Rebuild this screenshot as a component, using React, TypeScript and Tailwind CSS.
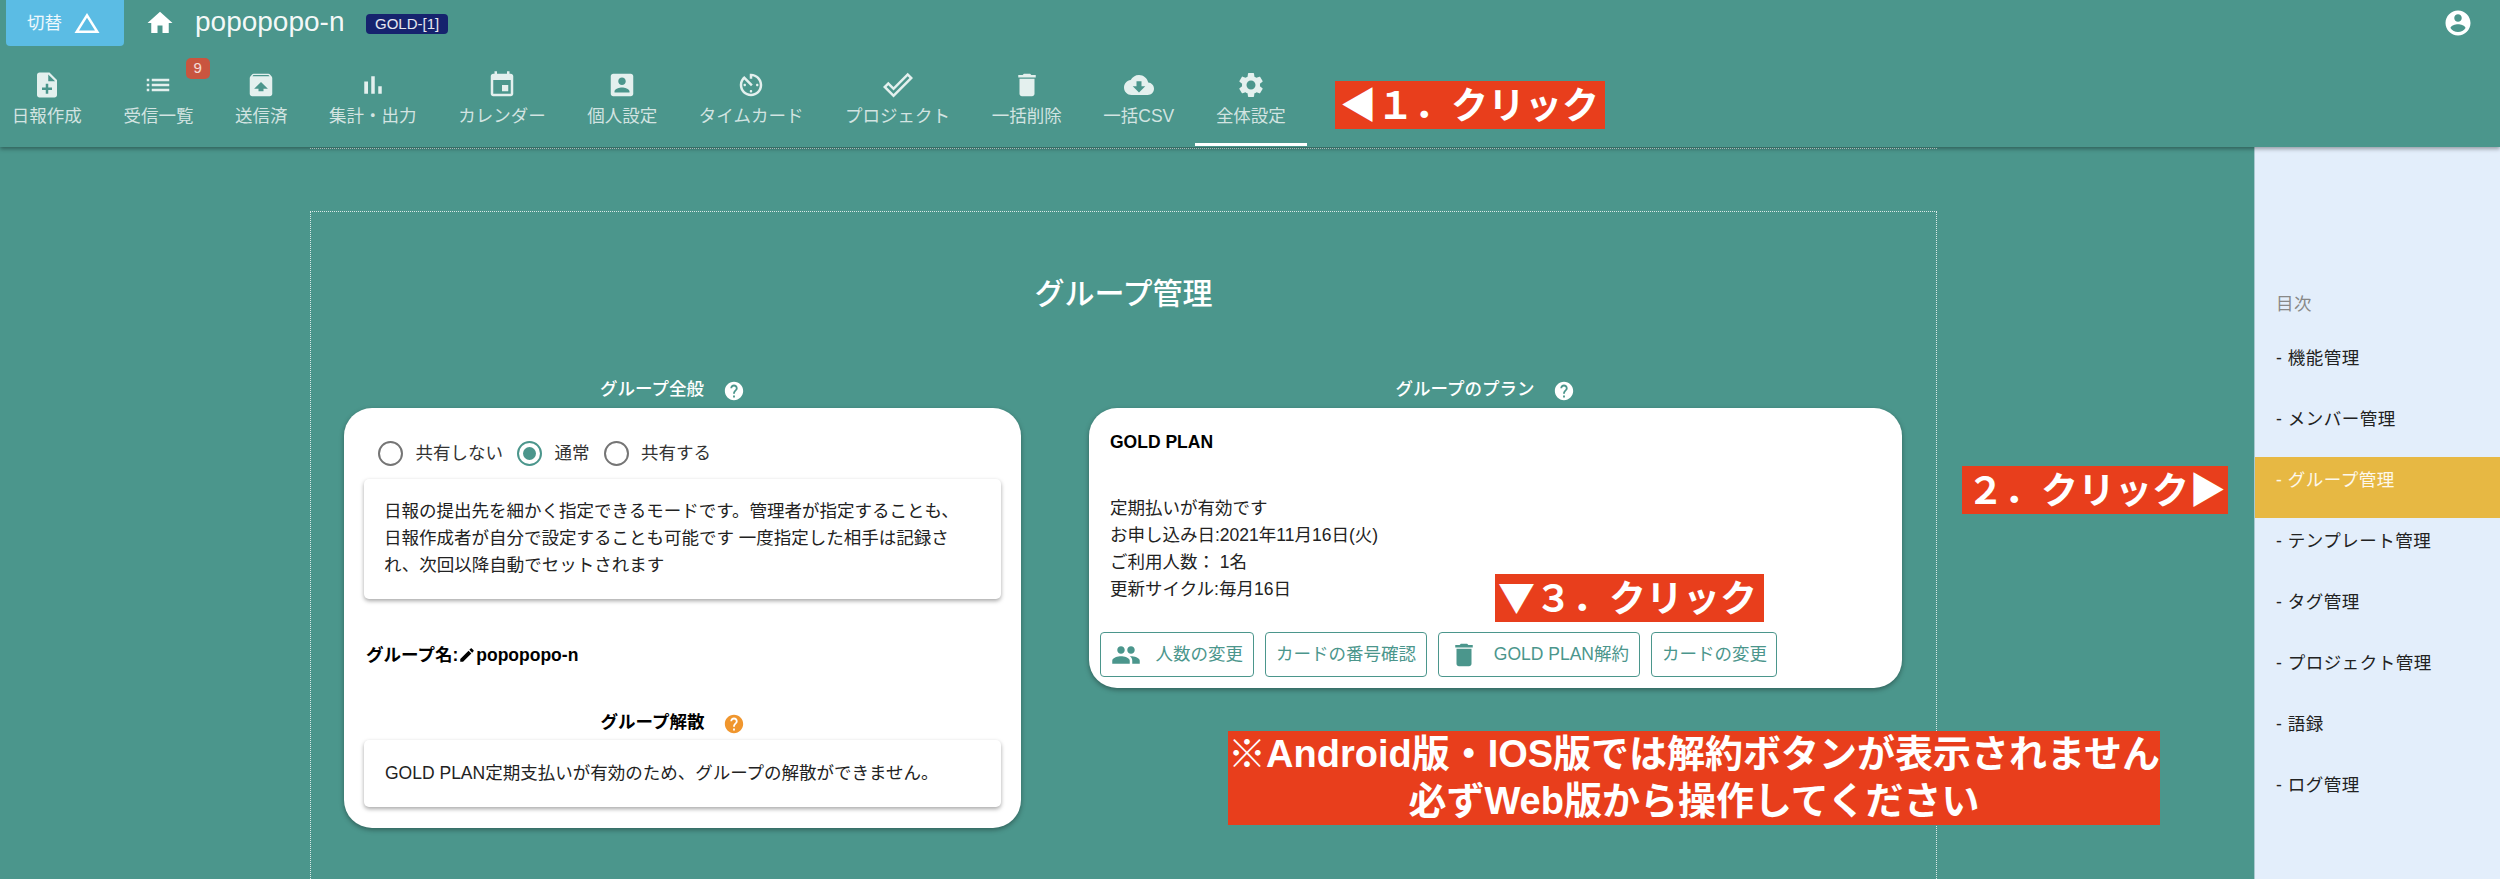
const icons = {
  noteAdd: 'M14 2H6c-1.1 0-1.99.9-1.99 2L4 20c0 1.1.89 2 1.99 2H18c1.1 0 2-.9 2-2V8l-6-6zm2 14h-3v3h-2v-3H8v-2h3v-3h2v3h3v2zm-3-7V3.5L18.5 9H13z',
  list: 'M3 13h2v-2H3v2zm0 4h2v-2H3v2zm0-8h2V7H3v2zm4 4h14v-2H7v2zm0 4h14v-2H7v2zM7 7v2h14V7H7z',
  unarchive: 'M20.55 5.22l-1.39-1.68C18.88 3.21 18.47 3 18 3H6c-.47 0-.88.21-1.15.55L3.46 5.22C3.17 5.57 3 6.01 3 6.5V19c0 1.1.89 2 2 2h14c1.1 0 2-.9 2-2V6.5c0-.49-.17-.93-.45-1.28zM12 9.5l5.5 5.5H14v2h-4v-2H6.5L12 9.5zM5.12 5l.82-1h12l.93 1H5.12z',
  chart: 'M5 9.2h3V19H5zM10.6 5h2.8v14h-2.8zm5.6 8H19v6h-2.8z',
  event: 'M17 12h-5v5h5v-5zM16 1v2H8V1H6v2H5c-1.11 0-1.99.9-1.99 2L3 19c0 1.1.89 2 2 2h14c1.1 0 2-.9 2-2V5c0-1.1-.9-2-2-2h-1V1h-2zm3 18H5V8h14v11z',
  accountBox: 'M3 5v14c0 1.1.89 2 2 2h14c1.1 0 2-.9 2-2V5c0-1.1-.9-2-2-2H5c-1.11 0-2 .9-2 2zm12 4c0 1.66-1.34 3-3 3s-3-1.34-3-3 1.34-3 3-3 3 1.34 3 3zm-9 8c0-2 4-3.1 6-3.1s6 1.1 6 3.1v1H6v-1z',
  timer: 'M11 17c0 .55.45 1 1 1s1-.45 1-1-.45-1-1-1-1 .45-1 1zm0-14v4h2V5.08c3.39.49 6 3.39 6 6.92 0 3.87-3.13 7-7 7s-7-3.13-7-7c0-1.68.59-3.22 1.58-4.42L12 13l1.41-1.41-6.8-6.8v.02C4.42 6.45 3 9.05 3 12c0 4.97 4.02 9 9 9 4.97 0 9-4.03 9-9s-4.03-9-9-9h-1zm7 9c0-.55-.45-1-1-1s-1 .45-1 1 .45 1 1 1 1-.45 1-1zM6 12c0 .55.45 1 1 1s1-.45 1-1-.45-1-1-1-1 .45-1 1z',
  doneOutline: 'M19.77 5.03l1.4 1.4L8.43 19.17l-5.6-5.6 1.4-1.4 4.2 4.2L19.77 5.03m0-2.83L8.43 13.54l-4.2-4.2L0 13.57 8.43 22 24 6.43 19.77 2.2z',
  trash: 'M6 19c0 1.1.9 2 2 2h8c1.1 0 2-.9 2-2V7H6v12zM19 4h-3.5l-1-1h-5l-1 1H5v2h14V4z',
  cloud: 'M19.35 10.04C18.67 6.59 15.64 4 12 4 9.11 4 6.6 5.64 5.35 8.04 2.34 8.36 0 10.91 0 14c0 3.31 2.69 6 6 6h13c2.76 0 5-2.24 5-5 0-2.64-2.05-4.78-4.65-4.96zM17 13l-5 5-5-5h3V9h4v4h3z',
  settings: 'M19.14 12.94c.04-.3.06-.61.06-.94 0-.32-.02-.64-.07-.94l2.03-1.58c.18-.14.23-.41.12-.61l-1.92-3.32c-.12-.22-.37-.29-.59-.22l-2.39.96c-.5-.38-1.03-.7-1.62-.94l-.36-2.54c-.04-.24-.24-.41-.48-.41h-3.84c-.24 0-.43.17-.47.41l-.36 2.54c-.59.24-1.13.57-1.62.94l-2.39-.96c-.22-.08-.47 0-.59.22L2.74 8.87c-.12.21-.08.47.12.61l2.03 1.58c-.05.3-.09.63-.09.94s.02.64.07.94l-2.03 1.58c-.18.14-.23.41-.12.61l1.92 3.32c.12.22.37.29.59.22l2.39-.96c.5.38 1.03.7 1.62.94l.36 2.54c.05.24.24.41.48.41h3.84c.24 0 .44-.17.47-.41l.36-2.54c.59-.24 1.13-.56 1.62-.94l2.39.96c.22.08.47 0 .59-.22l1.92-3.32c.12-.22.07-.47-.12-.61l-2.01-1.58zM12 15.6c-1.98 0-3.6-1.62-3.6-3.6s1.62-3.6 3.6-3.6 3.6 1.62 3.6 3.6-1.62 3.6-3.6 3.6z',
  home: 'M10 20v-6h4v6h5v-8h3L12 3 2 12h3v8z',
  account: 'M12 2C6.48 2 2 6.48 2 12s4.48 10 10 10 10-4.48 10-10S17.52 2 12 2zm0 3c1.66 0 3 1.34 3 3s-1.34 3-3 3-3-1.34-3-3 1.34-3 3-3zm0 14.2c-2.5 0-4.71-1.28-6-3.22.03-1.99 4-3.08 6-3.08 1.99 0 5.97 1.09 6 3.08-1.29 1.94-3.5 3.22-6 3.22z',
  help: 'M12 2C6.48 2 2 6.48 2 12s4.48 10 10 10 10-4.48 10-10S17.52 2 12 2zm1 17h-2v-2h2v2zm2.07-7.75l-.9.92C13.45 12.9 13 13.5 13 15h-2v-.5c0-1.1.45-2.1 1.17-2.83l1.24-1.26c.37-.36.59-.86.59-1.41 0-1.1-.9-2-2-2s-2 .9-2 2H8c0-2.21 1.79-4 4-4s4 1.79 4 4c0 .88-.36 1.68-.93 2.25z',
  people: 'M16 11c1.66 0 2.99-1.34 2.99-3S17.66 5 16 5c-1.66 0-3 1.34-3 3s1.34 3 3 3zm-8 0c1.66 0 2.99-1.34 2.99-3S9.66 5 8 5C6.34 5 5 6.34 5 8s1.34 3 3 3zm0 2c-2.33 0-7 1.17-7 3.5V19h14v-2.5c0-2.33-4.67-3.5-7-3.5zm8 0c-.29 0-.62.02-.97.05 1.16.84 1.97 1.97 1.97 3.45V19h6v-2.5c0-2.33-4.67-3.5-7-3.5z',
  edit: 'M3 17.25V21h3.75L17.81 9.94l-3.75-3.75L3 17.25zM20.71 7.04c.39-.39.39-1.02 0-1.41l-2.34-2.34c-.39-.39-1.02-.39-1.41 0l-1.83 1.83 3.75 3.75 1.83-1.83z',
  triangle: 'M12 7.77L18.39 18H5.61L12 7.77M12 4L2 20h20L12 4z',
}

function Icon({ d, className }: { d: string; className?: string }) {
  return (
    <svg viewBox="0 0 24 24" fill="currentColor" className={className}>
      <path d={d} />
    </svg>
  )
}

const tabs = [
  { label: '日報作成', icon: icons.noteAdd },
  { label: '受信一覧', icon: icons.list, badge: '9' },
  { label: '送信済', icon: icons.unarchive },
  { label: '集計・出力', icon: icons.chart },
  { label: 'カレンダー', icon: icons.event },
  { label: '個人設定', icon: icons.accountBox },
  { label: 'タイムカード', icon: icons.timer },
  { label: 'プロジェクト', icon: icons.doneOutline },
  { label: '一括削除', icon: icons.trash },
  { label: '一括CSV', icon: icons.cloud },
  { label: '全体設定', icon: icons.settings, active: true },
]

const tocItems = ['機能管理', 'メンバー管理', 'グループ管理', 'テンプレート管理', 'タグ管理', 'プロジェクト管理', '語録', 'ログ管理']

function Header() {
  return (
    <header className="relative z-10 h-[147px] shrink-0 bg-[#4b968c] shadow-[0_2px_4px_rgba(0,0,0,0.35)]">
      <div className="flex h-[60px] items-start pl-[6px]">
        <button className="flex h-[46px] w-[118px] items-center rounded-b-[4px] bg-[#5bbce4] pl-[21px] text-[17.5px] text-white/90">
          切替
          <Icon d={icons.triangle} className="ml-[10px] h-[30px] w-[30px] text-white" />
        </button>
        <Icon d={icons.home} className="ml-[21px] mt-[8px] h-[30px] w-[30px] text-white" />
        <span className="ml-[20px] mt-[7px] text-[28px] leading-[30px] text-white/95">popopopo-n</span>
        <span className="ml-[22px] mt-[14px] flex h-[20px] items-center rounded-[4px] bg-[#16236e] px-[8.5px] text-[15px] text-white/90">GOLD-[1]</span>
        <Icon d={icons.account} className="ml-auto mr-[27px] mt-[8px] h-[30px] w-[30px] text-white" />
      </div>
      <nav className="-ml-[9px] flex">
        {tabs.map((tab) => (
          <div
            key={tab.label}
            className={`relative flex h-[86px] flex-col items-center border-b-[3px] px-[20.8px] pt-[10px] ${tab.active ? 'border-white' : 'border-transparent'}`}
          >
            <Icon d={tab.icon} className="h-[30px] w-[30px] text-[#e4f0ee]" />
            <span className="mt-[3px] whitespace-nowrap text-[17.5px] leading-[26px] text-white/75">{tab.label}</span>
            {tab.badge && (
              <span className="absolute left-[83px] top-[-2px] flex h-[21px] w-[24px] items-center justify-center rounded-[5px] bg-[#c9553f] text-[15px] text-white/80">
                {tab.badge}
              </span>
            )}
          </div>
        ))}
      </nav>
    </header>
  )
}

function Radio({ label, checked }: { label: string; checked?: boolean }) {
  return (
    <label className="flex items-center gap-[12.5px] text-[17.5px] text-[#333]">
      <span className={`flex h-[25px] w-[25px] items-center justify-center rounded-full border-2 ${checked ? 'border-[#4b968c]' : 'border-[#757575]'}`}>
        {checked && <span className="h-[13px] w-[13px] rounded-full bg-[#4b968c]" />}
      </span>
      {label}
    </label>
  )
}

function ColumnHeading({ title }: { title: string }) {
  return (
    <div className="flex h-[26px] items-center justify-center pr-[20px] text-[17.5px] font-medium text-white">
      {title}
      <Icon d={icons.help} className="ml-[19px] mt-[3px] h-[22px] w-[22px]" />
    </div>
  )
}

function PlanButton({ label, icon, className }: { label: string; icon?: string; className: string }) {
  return (
    <button className={`flex h-[45px] items-center justify-between whitespace-nowrap rounded-[4px] border border-[#4b968c] px-[10px] text-[17.5px] text-[#4b968c] ${className}`}>
      {icon && <Icon d={icon} className="h-[30px] w-[30px]" />}
      {label}
    </button>
  )
}

function Sidebar() {
  return (
    <aside className="w-[246px] shrink-0 border-l border-[#a9c8cf] bg-[#e3eefb] pt-[144px]">
      <p className="pb-[18px] pl-[21px] text-[17.5px] leading-[26px] tracking-[0.5px] text-[#888]">目次</p>
      {tocItems.map((item) => (
        <div
          key={item}
          className={`h-[61px] pl-[21px] pt-[8px] text-[17.5px] leading-[30px] tracking-[0.5px] ${item === 'グループ管理' ? 'bg-[#e7b843] text-white/90' : 'text-[#222]'}`}
        >
          - {item}
        </div>
      ))}
    </aside>
  )
}

export default function App() {
  return (
    <div className="relative flex h-[879px] flex-col overflow-hidden bg-[#4b968c] font-['Liberation_Sans','Noto_Sans_CJK_JP',sans-serif]">
      <Header />
      <div className="flex min-h-0 flex-1">
        <main className="min-w-0 flex-1 pl-[310px] pr-[317px]">
          <div className="h-[2px] border-b border-dotted border-white/80" />
          <section className="mt-[62px] h-[900px] border border-dotted border-white/80 px-[33px] pt-[62px]">
            <h1 className="text-center text-[30px] font-medium leading-[40px] text-white">グループ管理</h1>
            <div className="mt-[62px] grid grid-cols-[677px_813px] gap-x-[68px]">
              <div>
                <ColumnHeading title="グループ全般" />
                <div className="mt-[6px] h-[420px] rounded-[28px] bg-white px-[20px] shadow-[0_2px_5px_rgba(0,0,0,0.35)]">
                  <div className="flex h-[71px] items-center gap-[14px] pl-[14px] pt-[19px]">
                    <Radio label="共有しない" />
                    <Radio label="通常" checked />
                    <Radio label="共有する" />
                  </div>
                  <div className="h-[120px] rounded-[5px] bg-white pl-[20px] pt-[19px] text-[17.5px] leading-[27px] text-[#222] shadow-[0_2px_4px_rgba(0,0,0,0.35)]">
                    日報の提出先を細かく指定できるモードです。管理者が指定することも、<br />
                    日報作成者が自分で設定することも可能です 一度指定した相手は記録さ<br />
                    れ、次回以降自動でセットされます
                  </div>
                  <div className="mt-[43px] flex h-[26px] items-center pl-[2px] text-[17.5px] font-bold text-black">
                    グループ名:
                    <Icon d={icons.edit} className="h-[18px] w-[18px]" />
                    popopopo-n
                  </div>
                  <div className="mt-[41px] flex h-[26px] items-center justify-center pr-[19px] text-[17.5px] font-bold text-black">
                    グループ解散
                    <Icon d={icons.help} className="ml-[19px] mt-[3px] h-[22px] w-[22px] text-[#f0962e]" />
                  </div>
                  <div className="mt-[5px] h-[67px] rounded-[5px] bg-white pl-[21px] pt-[20px] text-[17.5px] leading-[27px] text-[#222] shadow-[0_2px_4px_rgba(0,0,0,0.35)]">
                    GOLD PLAN定期支払いが有効のため、グループの解散ができません。
                  </div>
                </div>
              </div>
              <div>
                <ColumnHeading title="グループのプラン" />
                <div className="mt-[6px] h-[280px] rounded-[28px] bg-white shadow-[0_2px_5px_rgba(0,0,0,0.35)]">
                  <p className="pl-[21px] pt-[21px] text-[17.5px] font-bold leading-[26px] text-black">GOLD PLAN</p>
                  <div className="mt-[40px] pl-[21px] text-[17.5px] leading-[27px] text-[#222]">
                    <p>定期払いが有効です</p>
                    <p>お申し込み日:2021年11月16日(火)</p>
                    <p>ご利用人数： 1名</p>
                    <p>更新サイクル:毎月16日</p>
                  </div>
                  <div className="mt-[29px] flex gap-[11px] pl-[11px]">
                    <PlanButton label="人数の変更" icon={icons.people} className="w-[154px]" />
                    <PlanButton label="カードの番号確認" className="w-[162px]" />
                    <PlanButton label="GOLD PLAN解約" icon={icons.trash} className="w-[202px]" />
                    <PlanButton label="カードの変更" className="w-[126px]" />
                  </div>
                </div>
              </div>
            </div>
          </section>
        </main>
        <Sidebar />
      </div>

      {/* red annotations laid over the screenshot */}
      <div className="absolute left-[1335px] top-[81px] z-20 flex h-[48px] w-[270px] items-center whitespace-nowrap bg-[#e83e1c] pb-[3px] pl-[5px] font-['Noto_Sans_CJK_JP',sans-serif] text-[37px] font-bold text-white">◀１．クリック</div>
      <div className="absolute left-[1962px] top-[466px] z-20 flex h-[48px] w-[266px] items-center whitespace-nowrap bg-[#e83e1c] pb-[3px] pl-[5px] font-['Noto_Sans_CJK_JP',sans-serif] text-[37px] font-bold text-white">２．クリック▶</div>
      <div className="absolute left-[1495px] top-[574px] z-20 flex h-[48px] w-[269px] items-center whitespace-nowrap bg-[#e83e1c] pb-[3px] pl-[3px] font-['Noto_Sans_CJK_JP',sans-serif] text-[37px] font-bold text-white">▼３．クリック</div>
      <div className="absolute left-[1228px] top-[731px] z-20 flex h-[94px] w-[932px] flex-col items-center justify-center whitespace-nowrap bg-[#e83e1c] text-[38px] font-bold leading-[47px] text-white">
        <span>※Android版・IOS版では解約ボタンが表示されません</span>
        <span>必ずWeb版から操作してください</span>
      </div>
    </div>
  )
}
